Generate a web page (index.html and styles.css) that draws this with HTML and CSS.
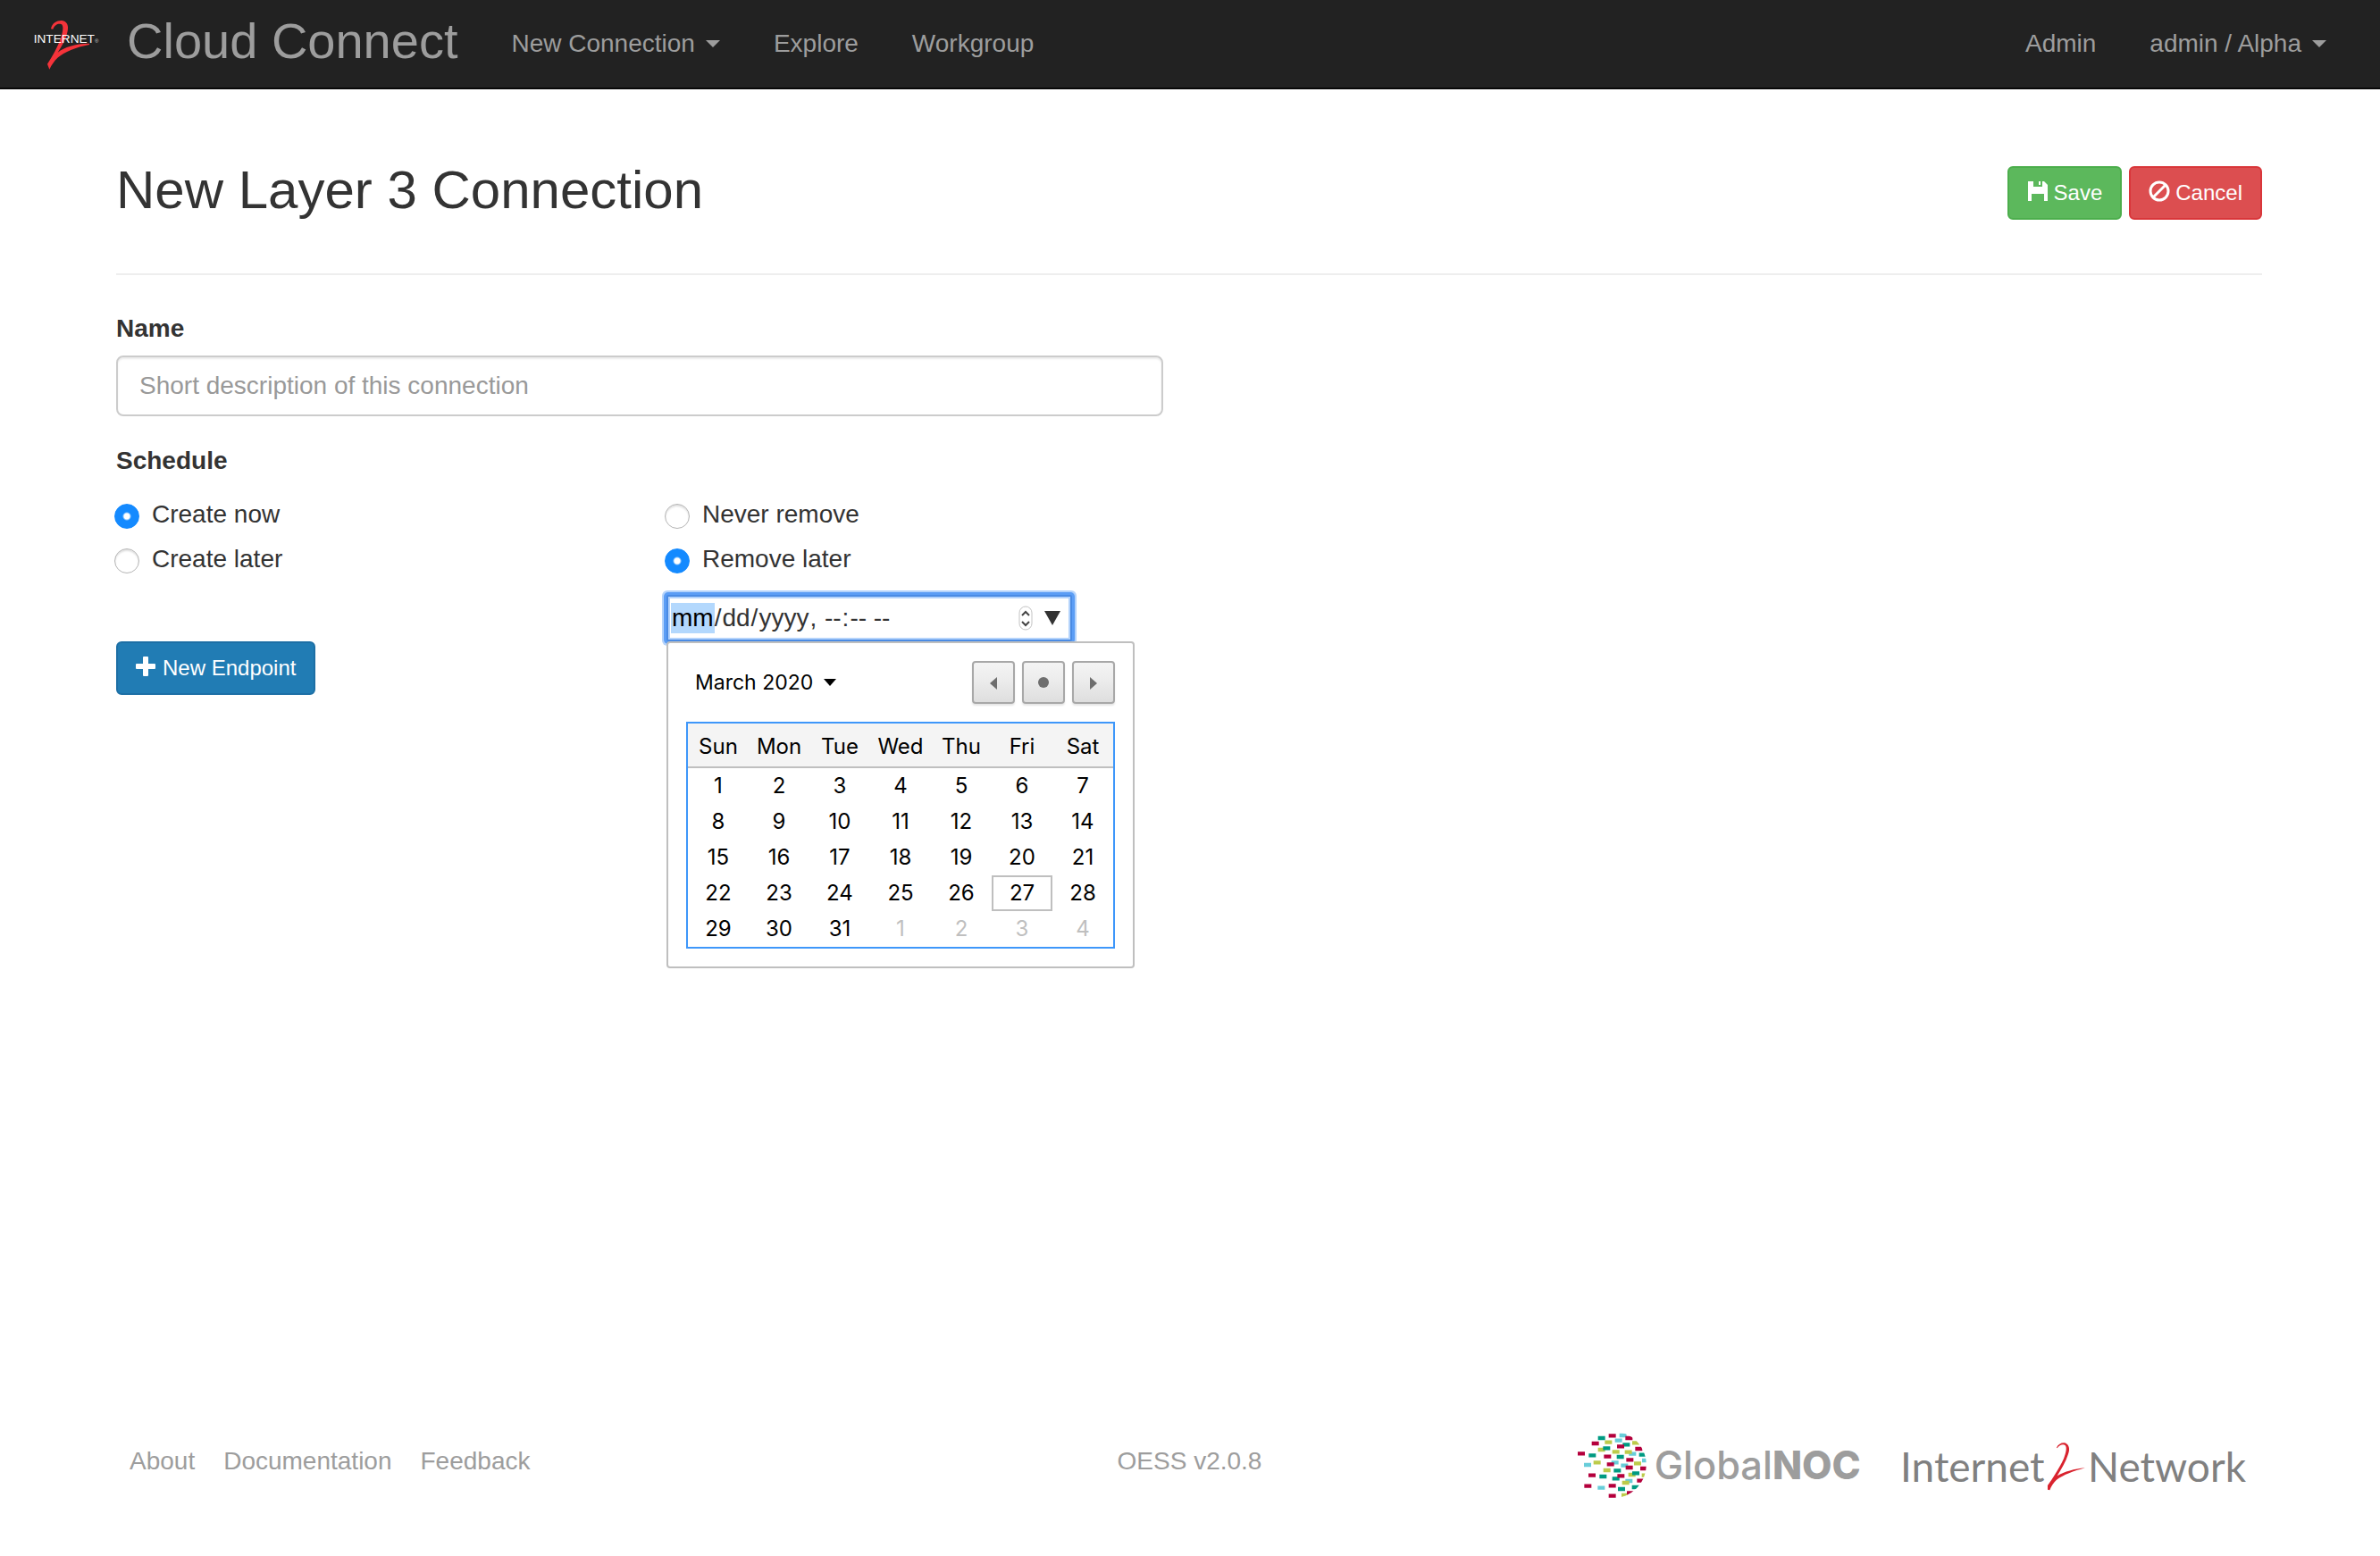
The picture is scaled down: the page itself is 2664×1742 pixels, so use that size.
FILE: index.html
```html
<!DOCTYPE html>
<html lang="en">
<head>
<meta charset="utf-8">
<title>New Layer 3 Connection</title>
<link rel="stylesheet" href="styles.css">
</head>
<body>
<nav class="navbar">
  <a class="brand" href="#">
    <svg class="brand-logo" viewBox="48 30 228 180" width="76" height="60" aria-hidden="true">
      <path fill="#f5333a" d="M111 70C114 50 133 41 148 42C165 45 171 58 167 77C162 104 148 127 134 149C157 131 190 120 240 119V123C195 131 155 149 135 166C122 178 113 192 106 206L99 188C113 167 135 130 146 96C152 75 154 57 145 54C136 51 124 55 118 71Z"/>
      <text class="logo-word" x="53" y="116">INTERNET</text>
      <text class="logo-mark" x="258" y="116">®</text>
    </svg>
    <span class="brand-name">Cloud Connect</span>
  </a>
  <ul class="nav-list">
    <li><a class="nav-link" href="#">New Connection <span class="caret"></span></a></li>
    <li><a class="nav-link" href="#">Explore</a></li>
    <li><a class="nav-link" href="#">Workgroup</a></li>
  </ul>
  <ul class="nav-list nav-right">
    <li><a class="nav-link" href="#">Admin</a></li>
    <li><a class="nav-link" href="#">admin / Alpha <span class="caret"></span></a></li>
  </ul>
</nav>

<main class="page">
  <header class="page-header">
    <h2 class="page-title">New Layer 3 Connection</h2>
    <div class="actions">
      <button class="btn btn-success" type="button">
        <svg viewBox="0 0 24 24" width="24" height="24" aria-hidden="true"><path fill="#fff" d="M1 1H7V7H17V1H19L23 5V23H19V15H5V23H1ZM13 1H15V5H13Z"/></svg>
        Save
      </button>
      <button class="btn btn-danger" type="button">
        <svg viewBox="0 0 24 24" width="24" height="24" aria-hidden="true"><g fill="none" stroke="#fff" stroke-width="3"><circle cx="12" cy="12" r="10"/><path d="M5 19L19 5"/></g></svg>
        Cancel
      </button>
    </div>
  </header>

  <form class="form">
    <div class="form-group">
      <label class="heading" for="name">Name</label>
      <input class="text-input" id="name" type="text" placeholder="Short description of this connection">
    </div>
    <div class="heading">Schedule</div>
    <div class="schedule">
      <div class="options">
        <label class="option"><input class="radio" type="radio" name="create" checked>Create now</label>
        <label class="option"><input class="radio" type="radio" name="create">Create later</label>
      </div>
      <div class="options">
        <label class="option"><input class="radio" type="radio" name="remove">Never remove</label>
        <label class="option"><input class="radio" type="radio" name="remove" checked>Remove later</label>
        <div class="date-field">
          <input class="date-input" type="datetime-local" aria-label="Remove at">
          <span class="date-tools" aria-hidden="true">
            <svg viewBox="0 0 16 28" width="16" height="28"><rect x="1" y="1" width="14" height="26" rx="7" fill="#fff" stroke="#c4c4c4"/><path fill="none" stroke="#444" stroke-width="2" d="M4 11L8 7L12 11M4 18L8 22L12 18"/></svg>
            <svg viewBox="0 0 20 16" width="20" height="16"><path fill="#333" d="M1 0H19L10 16Z"/></svg>
          </span>
          <div class="picker">
            <div class="picker-head">
              <button class="month" type="button">March 2020 <span class="month-caret"></span></button>
              <div class="picker-nav">
                <button class="step" type="button" aria-label="Previous month"><svg viewBox="0 0 16 16" width="16" height="16"><path fill="#6e6e6e" d="M12 2V16L4 9Z"/></svg></button>
                <button class="step" type="button" aria-label="Today"><svg viewBox="0 0 16 16" width="16" height="16"><circle cx="8" cy="8" r="6" fill="#6e6e6e"/></svg></button>
                <button class="step" type="button" aria-label="Next month"><svg viewBox="0 0 16 16" width="16" height="16"><path fill="#6e6e6e" d="M4 2V16L12 9Z"/></svg></button>
              </div>
            </div>
            <table class="calendar">
              <thead><tr><th>Sun</th><th>Mon</th><th>Tue</th><th>Wed</th><th>Thu</th><th>Fri</th><th>Sat</th></tr></thead>
              <tbody>
                <tr><td>1</td><td>2</td><td>3</td><td>4</td><td>5</td><td>6</td><td>7</td></tr>
                <tr><td>8</td><td>9</td><td>10</td><td>11</td><td>12</td><td>13</td><td>14</td></tr>
                <tr><td>15</td><td>16</td><td>17</td><td>18</td><td>19</td><td>20</td><td>21</td></tr>
                <tr><td>22</td><td>23</td><td>24</td><td>25</td><td>26</td><td class="today">27</td><td>28</td></tr>
                <tr><td>29</td><td>30</td><td>31</td><td class="other">1</td><td class="other">2</td><td class="other">3</td><td class="other">4</td></tr>
              </tbody>
            </table>
          </div>
        </div>
      </div>
    </div>
    <button class="btn btn-primary" type="button">
      <svg viewBox="0 0 24 24" width="24" height="24" aria-hidden="true"><path fill="#fff" d="M9 1H13Q14 1 14 2V9H21Q22 9 22 10V14Q22 15 21 15H14V22Q14 23 13 23H9Q8 23 8 22V15H1Q0 15 0 14V10Q0 9 1 9H8V2Q8 1 9 1Z"/></svg>
      New Endpoint
    </button>
  </form>
</main>

<footer class="footer">
  <div class="footer-links">
    <a href="#">About</a>
    <a href="#">Documentation</a>
    <a href="#">Feedback</a>
  </div>
  <div class="version">OESS v2.0.8</div>
  <div class="footer-logos">
    <svg viewBox="78 75 960 228" width="320" height="76" role="img" aria-label="GlobalNOC">
      <defs>
        <clipPath id="globe"><path d="M70 70H196A109 109 0 0 1 196 295H70Z"/></clipPath>
      </defs>
      <g clip-path="url(#globe)" fill="none" stroke-width="13">
        <path stroke="#68cdd9" d="M218 84h24M203 101h24M250 146h24M294 168h24M191 175h24M99 183h24M223 185h24M238 237h24M145 260h24"/>
        <path stroke="#bccb4a" d="M169 107h24M261 109h24M146 132h24M194 139h24M236 140h24M131 175h24M267 178h24M164 201h24M248 216h24M293 218h24M227 243h24M225 285h24"/>
        <path stroke="#009a82" d="M146 93h24M229 115h24M163 127h24M115 151h24M209 156h24M284 149h24M199 202h24M261 211h24M151 222h24M194 229h24M213 264h24M260 258h24"/>
        <path stroke="#b4003c" d="M182 85h24M238 93h24M125 111h24M210 121h24M271 129h24M78 145h24M166 155h24M241 166h24M176 181h24M239 192h24M288 195h24M114 218h24M211 220h24M277 236h24M100 254h24M182 253h24M243 277h24M182 287h24"/>
      </g>
      <text class="noc-text" x="335" y="230">Global<tspan class="noc-bold">NOC</tspan></text>
    </svg>
    <svg viewBox="0 0 387 76" width="387" height="76" role="img" aria-label="Internet2 Network">
      <text class="i2-text" x="-4" y="55">Internet</text>
      <text class="i2-text" x="206" y="55">Network</text>
      <g transform="translate(-31 -15) scale(.3333)">
        <path fill="#d9232e" d="M606 95C612 82 626 76 637 80C649 86 651 101 645 117C637 143 621 168 608 190C633 175 665 167 702 163C662 174 630 186 606 203C596 212 588 224 583 238L576 236V222C592 200 616 163 630 132C637 114 642 95 635 87C627 82 616 86 608 97Z"/>
      </g>
    </svg>
  </div>
</footer>
</body>
</html>
```
FILE: styles.css
```css
* { box-sizing: border-box; }

body {
  margin: 0;
  min-height: 100vh;
  display: flex;
  flex-direction: column;
  background: #fff;
  color: #333;
  font: 28px/40px "Liberation Sans", Arial, sans-serif;
}

a { color: inherit; text-decoration: none; }
button, input { font-family: inherit; }

/* Top bar */
.navbar {
  display: flex;
  align-items: center;
  height: 100px;
  padding: 0 30px 0 36px;
  background: #222;
  border-bottom: 2px solid #080808;
  color: #9d9d9d;
}
.brand { display: flex; align-items: center; gap: 30px; margin-right: 30px; }
.brand-logo { display: block; overflow: visible; }
.brand-name { font-size: 56px; line-height: 56px; padding-bottom: 6px; }
.logo-word { font: 41px "Liberation Sans", sans-serif; fill: #fff; }
.logo-mark { font: 18px "Liberation Sans", sans-serif; fill: #ccc; }
.nav-list { display: flex; margin: 0; padding: 0; list-style: none; }
.nav-right { margin-left: auto; }
.nav-link { display: flex; align-items: center; gap: 12px; padding: 0 30px; }
.caret {
  border-top: 8px solid;
  border-left: 8px solid transparent;
  border-right: 8px solid transparent;
}

/* Page heading */
.page { flex: 1; padding: 80px 132px 0 130px; }
.page-header {
  display: flex;
  justify-content: space-between;
  align-items: flex-end;
  padding-bottom: 60px;
  border-bottom: 2px solid #eee;
}
.page-title { margin: 0; font-size: 60px; line-height: 66px; font-weight: 400; }
.actions { display: flex; gap: 8px; }

.btn {
  display: inline-flex;
  align-items: center;
  gap: 6px;
  height: 60px;
  padding: 0 20px;
  border: 2px solid;
  border-radius: 6px;
  color: #fff;
  font-size: 24px;
  line-height: 36px;
}
.btn svg { margin-bottom: 4px; }
.btn-success { background: #5cb85c; border-color: #4cae4c; }
.btn-danger { background: #dc4e50; border-color: #d9363a; }
.btn-primary { background: #217cb4; border-color: #1d6fa5; }

/* Form */
.form { width: calc(50% - 29px); padding-top: 40px; }
.form-group { margin-bottom: 30px; }
.heading { display: block; font-weight: 700; }
.text-input {
  display: block;
  width: 100%;
  height: 68px;
  margin-top: 10px;
  padding: 0 24px;
  border: 2px solid #ccc;
  border-radius: 8px;
  box-shadow: inset 0 2px 2px rgba(0, 0, 0, .075);
  font-size: 28px;
}
.text-input::placeholder { color: #999; opacity: 1; }

.schedule { display: grid; grid-template-columns: 1fr 1fr; gap: 60px; margin-top: 20px; }
.options { display: flex; flex-direction: column; align-items: flex-start; gap: 10px; }
.option { display: flex; align-items: center; gap: 14px; margin-left: -2px; }
.radio {
  appearance: none;
  width: 28px;
  height: 28px;
  margin: 4px 0 0;
  border: 1px solid #b5b5b5;
  border-radius: 50%;
  background: #fff;
  box-shadow: inset 0 2px 2px rgba(0, 0, 0, .12);
}
.radio:checked {
  border-color: #148aff;
  background: radial-gradient(circle, #fff 3px, #148aff 5px);
  box-shadow: none;
}

/* Date field and its pop-up calendar */
.date-field { position: relative; width: 454px; margin-top: 10px; }
.date-input {
  display: block;
  width: 100%;
  height: 52px;
  padding: 0 3px;
  border: 2px solid #4a8be4;
  border-radius: 2px;
  outline: none;
  background: #fff;
  box-shadow: 0 0 0 3px #5b9df5, 0 0 0 5px #b4d3fb, inset 0 0 0 2px #b4d3fb;
  color: #333;
  font-size: 28px;
}
.date-input::-webkit-calendar-picker-indicator { display: none; }
.date-input::-webkit-datetime-edit-month-field { padding: 2px 1px; background: #b3d8fd; color: #000; }
.date-input::-webkit-datetime-edit-day-field,
.date-input::-webkit-datetime-edit-year-field,
.date-input::-webkit-datetime-edit-hour-field,
.date-input::-webkit-datetime-edit-minute-field,
.date-input::-webkit-datetime-edit-ampm-field { padding: 2px 1px; }
.date-tools {
  position: absolute;
  inset: 0 12px 0 auto;
  display: flex;
  align-items: center;
  gap: 12px;
}
.picker {
  position: absolute;
  top: 100%;
  left: 0;
  width: 524px;
  padding: 20px;
  border: 2px solid #bfbfbf;
  border-radius: 4px;
  background: #fff;
  color: #000;
  font: 24px/40px Inter, sans-serif;
}
.picker-head { display: flex; justify-content: space-between; align-items: center; margin-bottom: 20px; }
.month {
  display: flex;
  align-items: center;
  gap: 12px;
  padding: 0 10px;
  border: 0;
  background: none;
  color: #000;
  font-size: 23px;
}
.month-caret {
  border-top: 8px solid;
  border-left: 7px solid transparent;
  border-right: 7px solid transparent;
}
.picker-nav { display: flex; gap: 8px; }
.step {
  display: grid;
  place-items: center;
  width: 48px;
  height: 48px;
  padding: 0;
  border: 2px solid #a8a8a8;
  border-radius: 4px;
  background: linear-gradient(#f4f4f4, #ededed 40%, #dedede);
  box-shadow: 0 2px 2px rgba(0, 0, 0, .1);
}
.calendar {
  width: 100%;
  table-layout: fixed;
  border: 2px solid #3e97fa;
  border-spacing: 0;
  text-align: center;
}
.calendar th {
  height: 50px;
  padding: 4px 0 0;
  border-bottom: 2px solid #bfbfbf;
  background: #f4f4f4;
  font-weight: 400;
}
.calendar td { height: 40px; padding: 0; }
.calendar .today { border: 2px solid #bfbfbf; line-height: 36px; }
.calendar .other { color: #bfbfbf; }

/* Footer */
.footer {
  display: grid;
  grid-template-columns: 1fr auto 1fr;
  align-items: start;
  padding: 0 146px 62px 145px;
  color: #9d9d9d;
}
.footer-links { display: flex; gap: 32px; padding-top: 12px; }
.version { padding-top: 12px; }
.footer-logos { display: flex; justify-content: flex-end; gap: 45px; }
.footer-logos svg { display: block; overflow: visible; }
.noc-text { font: 500 130px Inter, sans-serif; fill: #9d9d9d; }
.noc-bold { font-weight: 800; }
.i2-text { font: 46px Lato, "Liberation Sans", sans-serif; fill: #808080; }
```
